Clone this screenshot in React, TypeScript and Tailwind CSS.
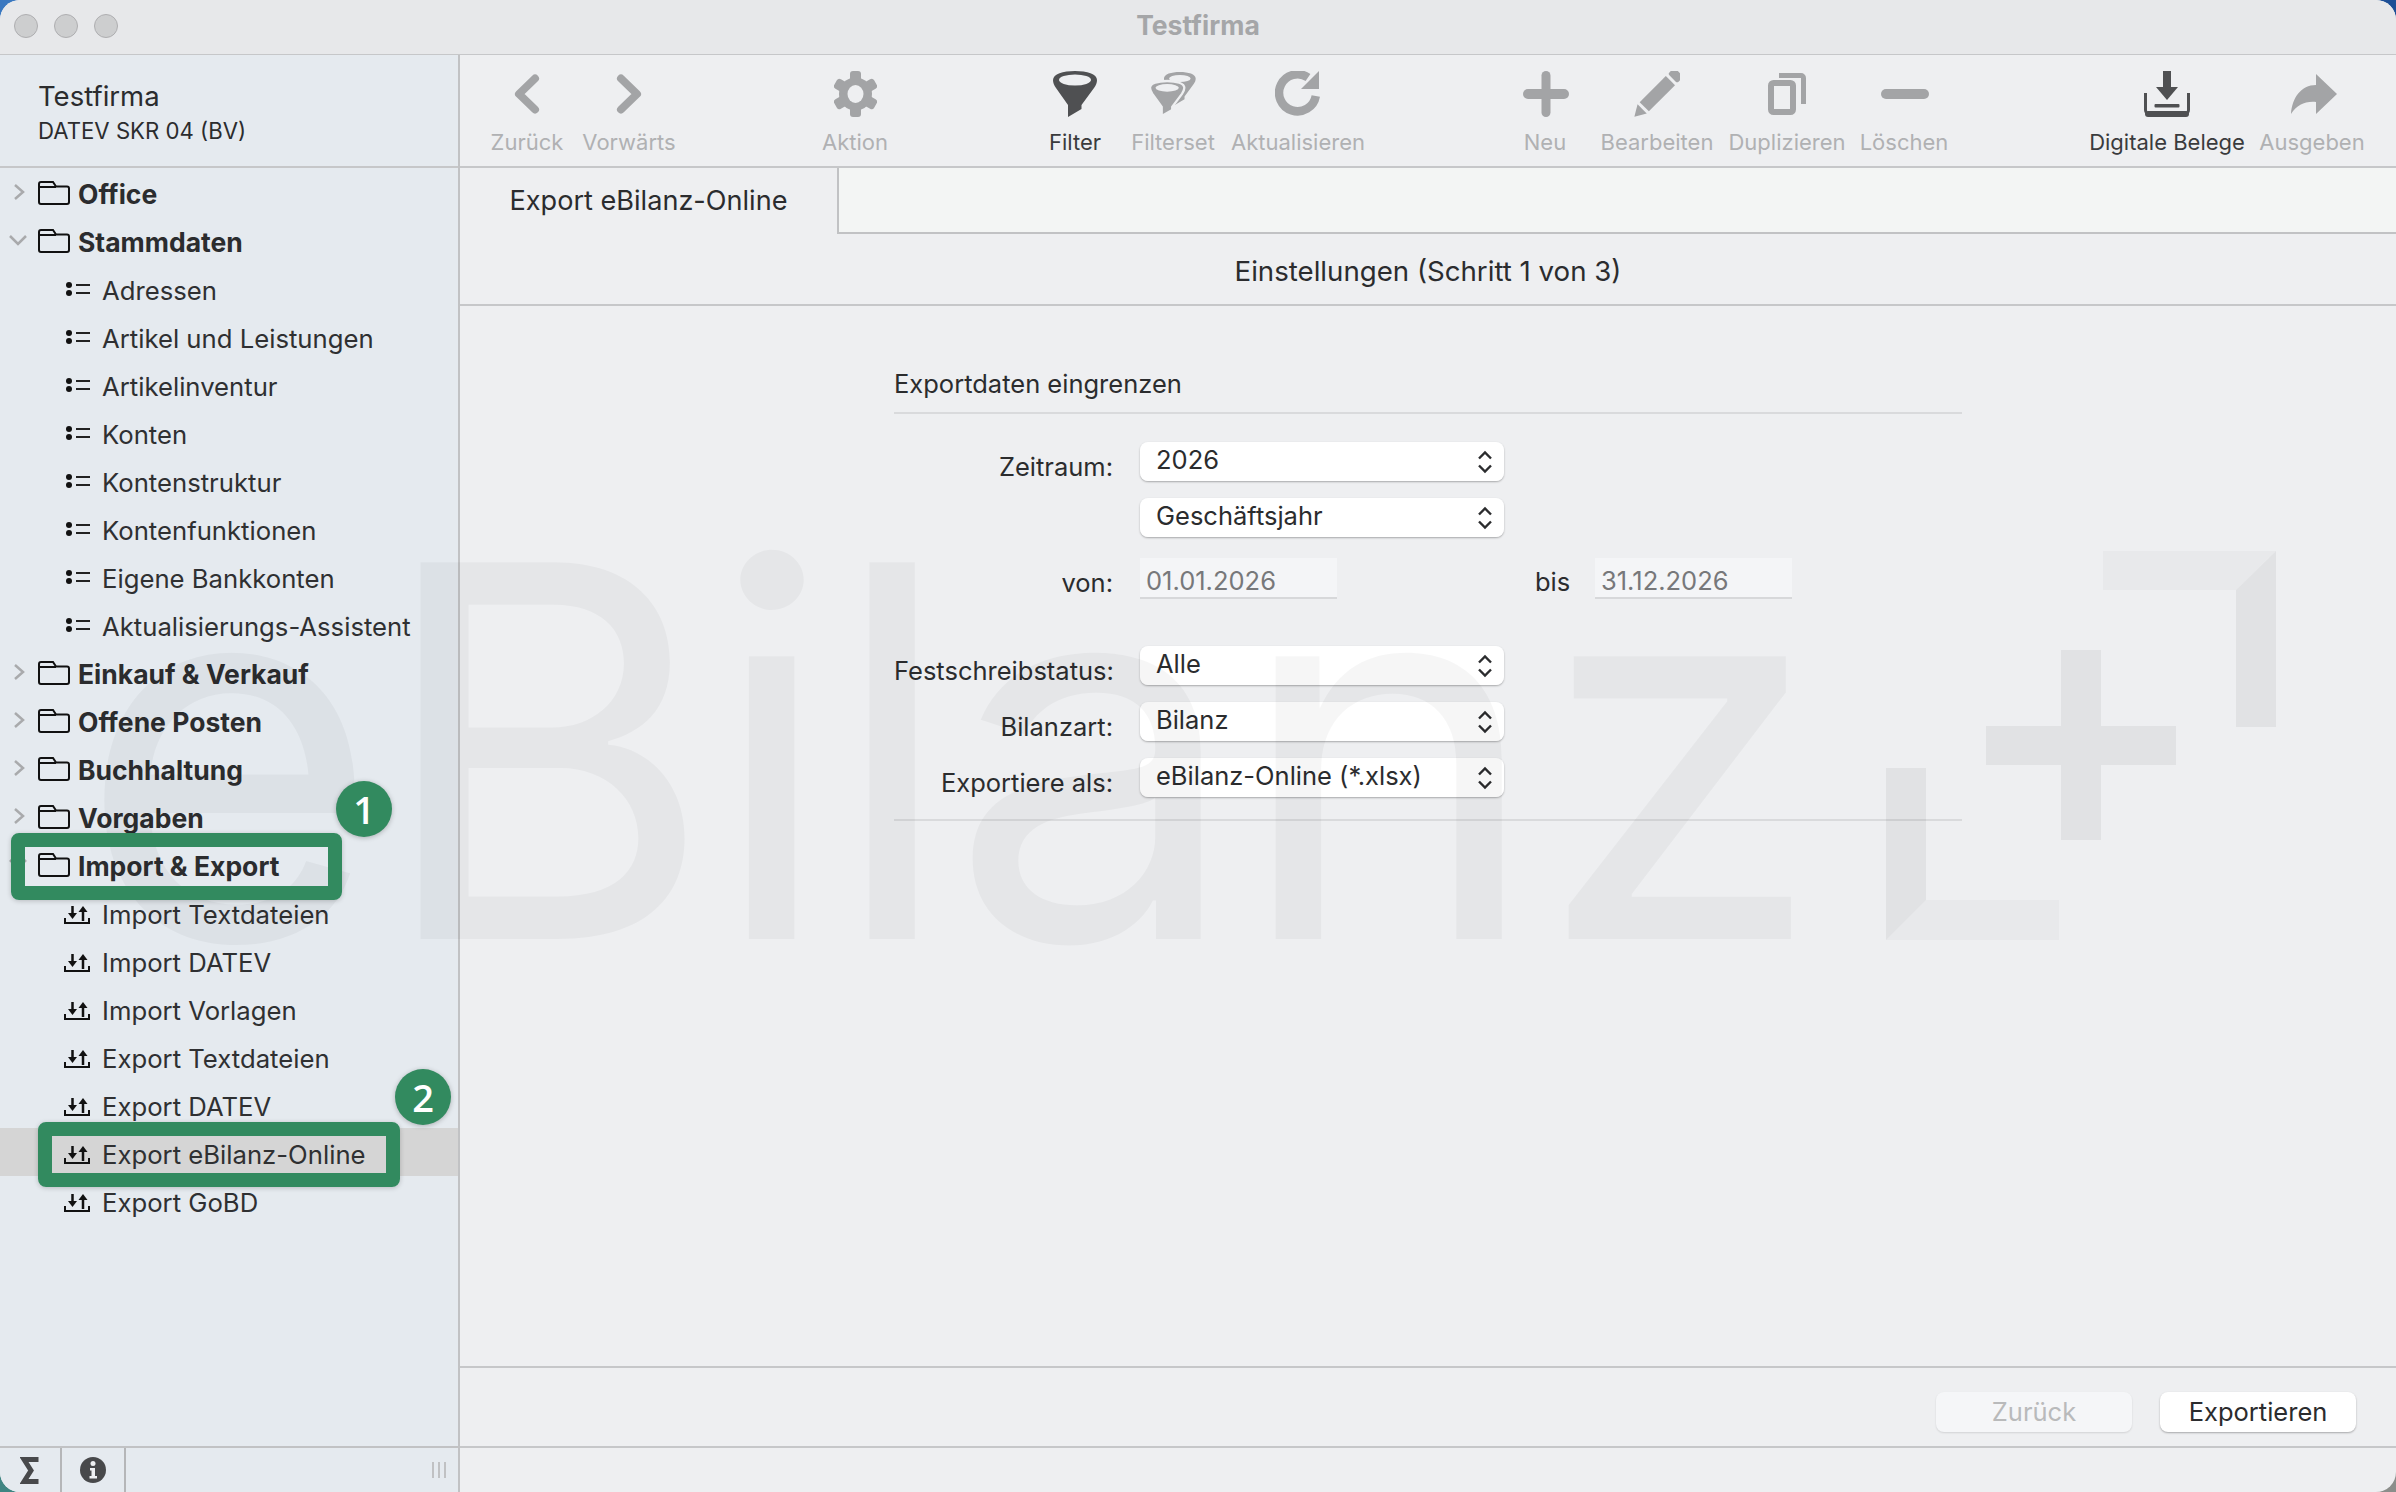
import React from "react";

const GRAY = "#a3a4a6";
const DARK = "#4f5052";

const Chevron = ({ dir }: { dir: "left" | "right" }) => (
  <svg width="26" height="40" viewBox="0 0 26 40">
    <polyline
      points={dir === "left" ? "21,4.5 5,20 21,35.5" : "5,4.5 21,20 5,35.5"}
      fill="none"
      stroke={GRAY}
      strokeWidth="8"
      strokeLinecap="round"
      strokeLinejoin="round"
    />
  </svg>
);

const Gear = () => (
  <svg width="43" height="46" viewBox="0 0 43 46">
    <g fill={GRAY}>
      <circle cx="21.5" cy="23" r="16.5" />
      <rect x="16" y="0" width="11" height="46" rx="3" />
      <rect x="16" y="0" width="11" height="46" rx="3" transform="rotate(60 21.5 23)" />
      <rect x="16" y="0" width="11" height="46" rx="3" transform="rotate(120 21.5 23)" />
    </g>
    <ellipse cx="21.5" cy="23" rx="8" ry="9" fill="#eeeff1" />
  </svg>
);

const funnel = "M0 9C0 3 10 0 22 0S44 3 44 9C44 12 43 14 41 17L28.5 34V38L15 46V34L3 17C1 14 0 12 0 9Z";

const Filter = () => (
  <svg width="44" height="46" viewBox="0 0 44 46">
    <path d={funnel} fill={DARK} />
    <ellipse cx="22" cy="9" rx="16" ry="5.5" fill="#eeeff1" />
  </svg>
);

const FilterSet = () => (
  <svg width="46" height="44" viewBox="0 0 46 44">
    <g transform="translate(14 0) scale(0.72 0.72)">
      <path d={funnel} fill={GRAY} />
      <ellipse cx="22" cy="9" rx="15" ry="5" fill="#eeeff1" />
    </g>
    <g transform="translate(0 9) scale(0.78 0.76)">
      <path d={funnel} fill={GRAY} stroke="#eeeff1" strokeWidth="3" />
      <ellipse cx="22" cy="9" rx="15" ry="5" fill="#eeeff1" />
    </g>
  </svg>
);

const Refresh = () => (
  <svg width="46" height="46" viewBox="0 0 46 46">
    <path d="M33 6.500A18.500 18.500 0 1 0 40.800 25" fill="none" stroke={GRAY} strokeWidth="8.500" />
    <path d="M44 0V18H26Z" fill={GRAY} />
  </svg>
);

const Plus = () => (
  <svg width="46" height="46" viewBox="0 0 46 46" className="ml-[2px]">
    <rect x="18.5" y="0" width="9" height="46" rx="4.5" fill={GRAY} />
    <rect x="0" y="18" width="46" height="10" rx="5" fill={GRAY} />
  </svg>
);

const Pencil = () => (
  <svg width="46" height="46" viewBox="0 0 46 46">
    <g transform="rotate(45 23 23)" fill={GRAY}>
      <rect x="16.5" y="-8" width="13" height="9" rx="2" />
      <rect x="16.5" y="4" width="13" height="37" />
      <path d="M16.5 44H29.5L23 55Z" />
    </g>
  </svg>
);

const Duplicate = () => (
  <svg width="38" height="42" viewBox="0 0 38 42">
    <rect x="3" y="10" width="22" height="29" rx="2.5" fill="none" stroke={GRAY} strokeWidth="6" />
    <path d="M11 2.5H33A2.5 2.5 0 0 1 35.5 5V31" fill="none" stroke={GRAY} strokeWidth="5" />
  </svg>
);

const Minus = () => (
  <svg width="48" height="10" viewBox="0 0 48 10" className="ml-[2px]">
    <rect width="48" height="10" rx="5" fill={GRAY} />
  </svg>
);

const Inbox = () => (
  <svg width="46" height="46" viewBox="0 0 46 46">
    <rect x="19" y="0" width="8" height="18" fill={DARK} />
    <path d="M12 16H34L23 29Z" fill={DARK} />
    <path d="M1.5 22V39A4 4 0 0 0 5.500 43H40.500A4 4 0 0 0 44.500 39V22" fill="none" stroke={DARK} strokeWidth="3" />
    <rect x="1" y="40" width="44" height="6" rx="3" fill={DARK} />
    <rect x="10.500" y="33" width="25" height="3.500" rx="1" fill={DARK} />
  </svg>
);

const Share = () => (
  <svg width="46" height="40" viewBox="0 0 46 40" className="ml-[4px]">
    <path d="M25 0L46 20L25 40V28C14 27 6 31 0 40C1 24 10 11 25 11Z" fill={GRAY} />
  </svg>
);

const tools = [
  { label: "Zurück", icon: <Chevron dir="left" />, cls: "w-[100px] ml-[17px]" },
  { label: "Vorwärts", icon: <Chevron dir="right" />, cls: "w-[104px]" },
  { label: "Aktion", icon: <Gear />, cls: "w-[100px] ml-[124px]" },
  { label: "Filter", icon: <Filter />, cls: "w-[100px] ml-[120px]", on: true },
  { label: "Filterset", icon: <FilterSet />, cls: "w-[96px]" },
  { label: "Aktualisieren", icon: <Refresh />, cls: "w-[154px]" },
  { label: "Neu", icon: <Plus />, cls: "w-[100px] ml-[120px]" },
  { label: "Bearbeiten", icon: <Pencil />, cls: "w-[124px]" },
  { label: "Duplizieren", icon: <Duplicate />, cls: "w-[136px]" },
  { label: "Löschen", icon: <Minus />, cls: "w-[98px]" },
  { label: "Digitale Belege", icon: <Inbox />, cls: "w-[170px] ml-[129px]", on: true },
  { label: "Ausgeben", icon: <Share />, cls: "w-[120px]" },
];

const FolderIcon = () => (
  <svg width="32" height="24" viewBox="0 0 32 24" className="shrink-0">
    <path
      d="M1 3A2 2 0 0 1 3 1H15L18 5.500H29A2 2 0 0 1 31 7.500V21A2 2 0 0 1 29 23H3A2 2 0 0 1 1 21ZM1 6H18"
      fill="none"
      stroke="#111"
      strokeWidth="2"
    />
  </svg>
);

const ListIcon = () => (
  <svg width="24" height="14" viewBox="0 0 24 14" className="shrink-0">
    <circle cx="3" cy="3" r="3" fill="#111" />
    <circle cx="3" cy="11" r="3" fill="#111" />
    <rect x="10" y="2" width="14" height="2" fill="#222" />
    <rect x="10" y="10" width="14" height="2" fill="#222" />
  </svg>
);

const TransferIcon = () => (
  <svg width="26" height="18" viewBox="0 0 26 18" className="mt-[3px] shrink-0">
    <path d="M1 12V17H25V12" fill="none" stroke="#111" strokeWidth="2" />
    <path d="M8.500 0V8" stroke="#111" strokeWidth="2.500" />
    <path d="M4 7H13L8.500 13Z" fill="#111" />
    <path d="M19 5V15" stroke="#111" strokeWidth="2.500" />
    <path d="M14.500 6H23.500L19 0Z" fill="#111" />
  </svg>
);

type Row = { label: string; kind: "open" | "closed" | "none" | "list" | "io"; on?: boolean };

const rows: Row[] = [
  { label: "Office", kind: "closed" },
  { label: "Stammdaten", kind: "open" },
  { label: "Adressen", kind: "list" },
  { label: "Artikel und Leistungen", kind: "list" },
  { label: "Artikelinventur", kind: "list" },
  { label: "Konten", kind: "list" },
  { label: "Kontenstruktur", kind: "list" },
  { label: "Kontenfunktionen", kind: "list" },
  { label: "Eigene Bankkonten", kind: "list" },
  { label: "Aktualisierungs-Assistent", kind: "list" },
  { label: "Einkauf & Verkauf", kind: "closed" },
  { label: "Offene Posten", kind: "closed" },
  { label: "Buchhaltung", kind: "closed" },
  { label: "Vorgaben", kind: "closed" },
  { label: "Import & Export", kind: "open" },
  { label: "Import Textdateien", kind: "io" },
  { label: "Import DATEV", kind: "io" },
  { label: "Import Vorlagen", kind: "io" },
  { label: "Export Textdateien", kind: "io" },
  { label: "Export DATEV", kind: "io" },
  { label: "Export eBilanz-Online", kind: "io", on: true },
  { label: "Export GoBD", kind: "io" },
];

const SidebarRow = ({ row }: { row: Row }) => {
  const isFolder = row.kind === "open" || row.kind === "closed";
  return (
    <div className={`relative flex h-12 items-center ${row.on ? "bg-[#d5d5d5]" : ""}`}>
      {isFolder ? (
        <>
          <svg width="26" height="20" viewBox="0 0 26 20" className="absolute left-[6px] top-[14px]">
            <polyline
              points={row.kind === "closed" ? "9,3 17,10 9,17" : "4,6 12,14 20,6"}
              fill="none"
              stroke="#a9aaac"
              strokeWidth="2.500"
            />
          </svg>
          <div className="ml-[38px] flex items-center gap-[8px] pt-[1px]">
            <FolderIcon />
            <span className="pt-[4px] text-[26.500px] font-bold leading-none text-[#2b2c2e]">{row.label}</span>
          </div>
        </>
      ) : (
        <div className="flex items-center pt-[3px]">
          <div className="ml-[64px] flex w-[38px] items-center">
            {row.kind === "list" ? <span className="ml-[2px]"><ListIcon /></span> : <TransferIcon />}
          </div>
          <span className="pt-[2px] text-[25.700px] leading-none text-[#2f3032]">{row.label}</span>
        </div>
      )}
    </div>
  );
};

const UpDown = () => (
  <svg width="16" height="24" viewBox="0 0 16 24" className="shrink-0">
    <path d="M2 8.500L8 2.500L14 8.500M2 15.500L8 21.500L14 15.500" fill="none" stroke="#2b2c2e" strokeWidth="2.400" />
  </svg>
);

const Select = ({ value }: { value: string }) => (
  <div className="flex h-[39px] w-[364px] items-center justify-between rounded-lg bg-white/95 pl-[16px] pr-[11px] shadow-[0_1px_2px_rgba(0,0,0,0.3)]">
    <span className="pb-[3px] text-[25.500px] leading-none text-[#2b2c2e]">{value}</span>
    <UpDown />
  </div>
);

const Label = ({ children }: { children: string }) => (
  <div className="mr-[27px] h-[39px] w-[219px] shrink-0 whitespace-nowrap pt-[10px] text-right text-[25.500px] leading-[30px] text-[#2b2c2e]">
    {children}
  </div>
);

const DateField = ({ value, w }: { value: string; w: string }) => (
  <div className={`flex h-[41px] ${w} items-center border-b-2 border-[#d7d8da] bg-[#f4f5f7] pl-[6px] pt-[6px] text-[25.500px] leading-none text-[#77787a]`}>
    {value}
  </div>
);

const Badge = ({ n, cls }: { n: string; cls: string }) => (
  <div className={`absolute ${cls} flex h-14 w-14 items-center justify-center rounded-full bg-[#328a5f] font-['Open_Sans',sans-serif] text-[38px] font-semibold leading-none text-white shadow-[0_1px_5px_rgba(0,0,0,0.25)]`}>
    {n}
  </div>
);

export default function App() {
  return (
    <div className="h-[1492px] w-[2396px] bg-[conic-gradient(#1d4f96_0_25%,#8b8e8b_25%_50%,#3f8582_50%_75%,#3a78c0_75%)] font-['Inter',sans-serif]">
      <div className="relative flex h-full w-full flex-col overflow-hidden rounded-[20px] bg-[#eeeff1]">
        {/* title bar */}
        <div className="relative flex h-[55px] shrink-0 items-center justify-center border-b border-[#c6c7c9] bg-[#e7e8ea]">
          <div className="absolute left-[14px] top-[14px] flex gap-4">
            <span className="h-6 w-6 rounded-full border border-[#aeaeb0] bg-[#cdcecf]" />
            <span className="h-6 w-6 rounded-full border border-[#aeaeb0] bg-[#cdcecf]" />
            <span className="h-6 w-6 rounded-full border border-[#aeaeb0] bg-[#cdcecf]" />
          </div>
          <span className="pb-[3px] text-[26.500px] font-bold leading-none text-[#a5a6a8]">Testfirma</span>
        </div>

        <div className="flex min-h-0 flex-1">
          {/* sidebar */}
          <aside className="flex w-[460px] shrink-0 flex-col border-r-2 border-[#c1c2c4] bg-[#e5eaef]">
            <div className="flex h-[113px] shrink-0 flex-col border-b-2 border-[#c6c7c9] pl-[38px] pt-[24px]">
              <span className="text-[27.500px] leading-[34px] text-[#2b2c2e]">Testfirma</span>
              <span className="mt-[3px] text-[22.200px] leading-[30px] text-[#2b2c2e]">DATEV SKR 04 (BV)</span>
            </div>
            <div className="min-h-0 flex-1">
              {rows.map((r) => (
                <SidebarRow key={r.label} row={r} />
              ))}
            </div>
            <div className="flex h-[46px] shrink-0 items-center border-t-2 border-[#c1c2c4]">
              <div className="flex h-full w-[62px] items-center justify-center border-r-2 border-[#b5b6b8]">
                <svg width="20" height="27" viewBox="0 0 20 27">
                  <path d="M18.500 2.500H4L11 13.500L4 24.500H18.500" fill="none" stroke="#48494b" strokeWidth="5" />
                </svg>
              </div>
              <div className="flex h-full w-[64px] items-center justify-center border-r-2 border-[#b5b6b8]">
                <svg width="26" height="26" viewBox="0 0 26 26">
                  <circle cx="13" cy="13" r="13" fill="#48494b" />
                  <circle cx="13" cy="6.500" r="2.500" fill="#eef0f2" />
                  <path d="M10 11H15V19H17V21.500H9.500V19H11.500V13.500H10Z" fill="#eef0f2" />
                </svg>
              </div>
              <div className="ml-auto mr-[12px] flex gap-[4px]">
                <span className="h-4 w-[2px] bg-[#c0c1c3]" />
                <span className="h-4 w-[2px] bg-[#c0c1c3]" />
                <span className="h-4 w-[2px] bg-[#c0c1c3]" />
              </div>
            </div>
          </aside>

          {/* main */}
          <main className="flex min-w-0 flex-1 flex-col">
            <div className="flex h-[113px] shrink-0 border-b-2 border-[#c6c7c9]">
              {tools.map((t) => (
                <div key={t.label} className={`flex shrink-0 flex-col items-center ${t.cls}`}>
                  <div className="mt-[16px] flex h-[46px] items-center justify-center">{t.icon}</div>
                  <span className={`mt-[10px] whitespace-nowrap text-[22px] leading-[30px] ${t.on ? "text-[#3a3b3d]" : "text-[#b0b1b3]"}`}>
                    {t.label}
                  </span>
                </div>
              ))}
            </div>

            <div className="flex h-[66px] shrink-0">
              <div className="flex w-[377px] items-center justify-center pb-[1px] text-[27.100px] leading-none text-[#2b2c2e]">
                Export eBilanz-Online
              </div>
              <div className="flex-1 border-b-2 border-l-2 border-[#c1c2c4] bg-[#f3f5f4]" />
            </div>
            <div className="flex h-[72px] shrink-0 items-center justify-center border-b-2 border-[#c6c7c9] pt-[6px] text-[27.650px] leading-none text-[#2b2c2e]">
              Einstellungen (Schritt 1 von 3)
            </div>

            <div className="min-h-0 flex-1 pl-[434px] pt-[53px]">
              <div className="w-[1068px]">
                <div className="h-[55px] border-b-2 border-[#d9dadc] text-[25.500px] leading-[50px] text-[#2b2c2e]">
                  Exportdaten eingrenzen
                </div>
                <div className="mt-[28px] flex">
                  <Label>Zeitraum:</Label>
                  <Select value="2026" />
                </div>
                <div className="mt-[17px] pl-[246px]">
                  <Select value="Geschäftsjahr" />
                </div>
                <div className="mt-[21px] flex">
                  <Label>von:</Label>
                  <DateField value="01.01.2026" w="w-[197px]" />
                  <div className="ml-[198px] w-[60px] pt-[9px] text-[25.500px] leading-[30px] text-[#2b2c2e]">bis</div>
                  <DateField value="31.12.2026" w="w-[197px]" />
                </div>
                <div className="mt-[47px] flex">
                  <Label>Festschreibstatus:</Label>
                  <Select value="Alle" />
                </div>
                <div className="mt-[17px] flex">
                  <Label>Bilanzart:</Label>
                  <Select value="Bilanz" />
                </div>
                <div className="mt-[17px] flex">
                  <Label>Exportiere als:</Label>
                  <Select value="eBilanz-Online (*.xlsx)" />
                </div>
                <div className="mt-[22px] h-[2px] bg-[#d9dadc]" />
              </div>
            </div>

            <div className="flex h-[82px] shrink-0 items-start justify-end gap-[28px] border-y-2 border-[#c6c7c9] pr-[40px] pt-[24px]">
              <div className="flex h-10 w-[196px] items-center justify-center rounded-lg bg-[#f5f6f8] text-[25.500px] leading-none text-[#b9babb] shadow-[0_1px_2px_rgba(0,0,0,0.12)]">
                Zurück
              </div>
              <div className="flex h-10 w-[196px] items-center justify-center rounded-lg bg-white text-[25.500px] leading-none text-[#2b2c2e] shadow-[0_1px_2px_rgba(0,0,0,0.3)]">
                Exportieren
              </div>
            </div>
            <div className="h-[44px] shrink-0" />
          </main>
        </div>

        {/* eBilanz+ watermark */}
        <div className="pointer-events-none absolute inset-0 overflow-hidden">
          <span className="absolute left-[78px] top-[492px] whitespace-nowrap text-[518px] leading-none tracking-[-5px] text-black/[0.035]">
            eBilanz
          </span>
          <svg width="2396" height="1492" viewBox="0 0 2396 1492" className="absolute left-0 top-0">
            <g fill="#000">
              <path d="M1886 768H1926V900L1886 940Z" fillOpacity="0.05" />
              <path d="M1926 900H2059V940H1886Z" fillOpacity="0.025" />
              <path d="M2061 650H2101V726H2176V765H2101V840H2061V765H1986V726H2061Z" fillOpacity="0.05" />
              <path d="M2103 551H2276L2236 590H2103Z" fillOpacity="0.025" />
              <path d="M2276 551V727H2236V590Z" fillOpacity="0.05" />
            </g>
          </svg>
        </div>

        {/* annotations */}
        <div className="absolute left-[11px] top-[833px] h-[67px] w-[331px] rounded-lg border-[14px] border-[#328a5f] shadow-[0_1px_5px_rgba(0,0,0,0.2)]" />
        <div className="absolute left-[38px] top-[1122px] h-[65px] w-[362px] rounded-lg border-[14px] border-[#328a5f] shadow-[0_1px_5px_rgba(0,0,0,0.2)]" />
        <Badge n="1" cls="left-[336px] top-[781px]" />
        <Badge n="2" cls="left-[395px] top-[1069px]" />
      </div>
    </div>
  );
}
